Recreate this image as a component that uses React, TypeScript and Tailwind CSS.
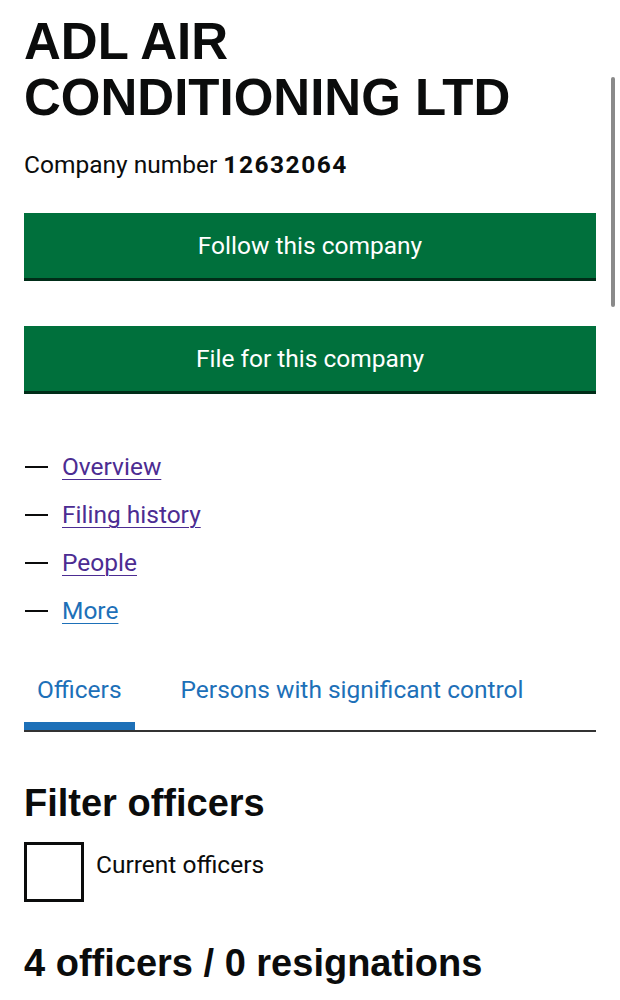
const body = "font-['Roboto','Noto_Sans',sans-serif]";
const heading = "font-['Liberation_Sans',Arial,sans-serif] font-bold";

const NAV_LINKS = [
  { label: "Overview", visited: true },
  { label: "Filing history", visited: true },
  { label: "People", visited: true },
  { label: "More", visited: false },
];

function GreenButton({ children }: { children: React.ReactNode }) {
  return (
    <button className="flex h-[65px] w-full items-center justify-center bg-[#00703c] text-[24.5px] leading-[30px] text-white shadow-[0_3px_0_#002d18]">
      {children}
    </button>
  );
}

export default function App() {
  return (
    <div className={`relative h-[1000px] overflow-hidden bg-white px-6 pt-[14px] text-[#0b0c0c] ${body}`}>
      <h1 className={`${heading} text-[51px] leading-[56px]`}>
        ADL AIR
        <br />
        CONDITIONING LTD
      </h1>

      <p className="mt-[24px] text-[24.5px] leading-[30px]">
        Company number <strong className="font-bold tracking-[1.5px]">12632064</strong>
      </p>

      <div className="mt-[33px] flex flex-col gap-[48px]">
        <GreenButton>Follow this company</GreenButton>
        <GreenButton>File for this company</GreenButton>
      </div>

      <ul className="mt-[52px]">
        {NAV_LINKS.map((item) => (
          <li key={item.label} className="flex h-[48px] items-center">
            <span className="ml-px h-[2px] w-[23px] bg-[#0b0c0c]" />
            <a
              href="#"
              className={`ml-[14px] text-[24.5px] leading-[30px] underline decoration-1 underline-offset-4 ${
                item.visited ? "text-[#4c2c92]" : "text-[#1d70b8]"
              }`}
            >
              {item.label}
            </a>
          </li>
        ))}
      </ul>

      <div className="mt-[40px] flex border-b-2 border-[#333]">
        <a href="#" className="border-b-[8px] border-[#1d70b8] px-[13px] pb-[17px] text-[24.5px] leading-[30px] text-[#1d70b8]">
          Officers
        </a>
        <a href="#" className="ml-[46px] pb-[18px] text-[24.5px] leading-[30px] text-[#1d70b8]">
          Persons with significant control
        </a>
      </div>

      <h2 className={`${heading} mt-[50px] text-[38px] leading-[42px]`}>Filter officers</h2>

      <label className="mt-[18px] flex items-start">
        <span className="h-[60px] w-[60px] border-[3px] border-[#0b0c0c]" />
        <span className="ml-3 mt-2 text-[24.5px] leading-[30px]">Current officers</span>
      </label>

      <h2 className={`${heading} mt-[40px] text-[38px] leading-[42px]`}>4 officers / 0 resignations</h2>

      <div className="absolute right-[5px] top-[77px] h-[230px] w-[4px] rounded-full bg-[#8a8a8a]" />
    </div>
  );
}
